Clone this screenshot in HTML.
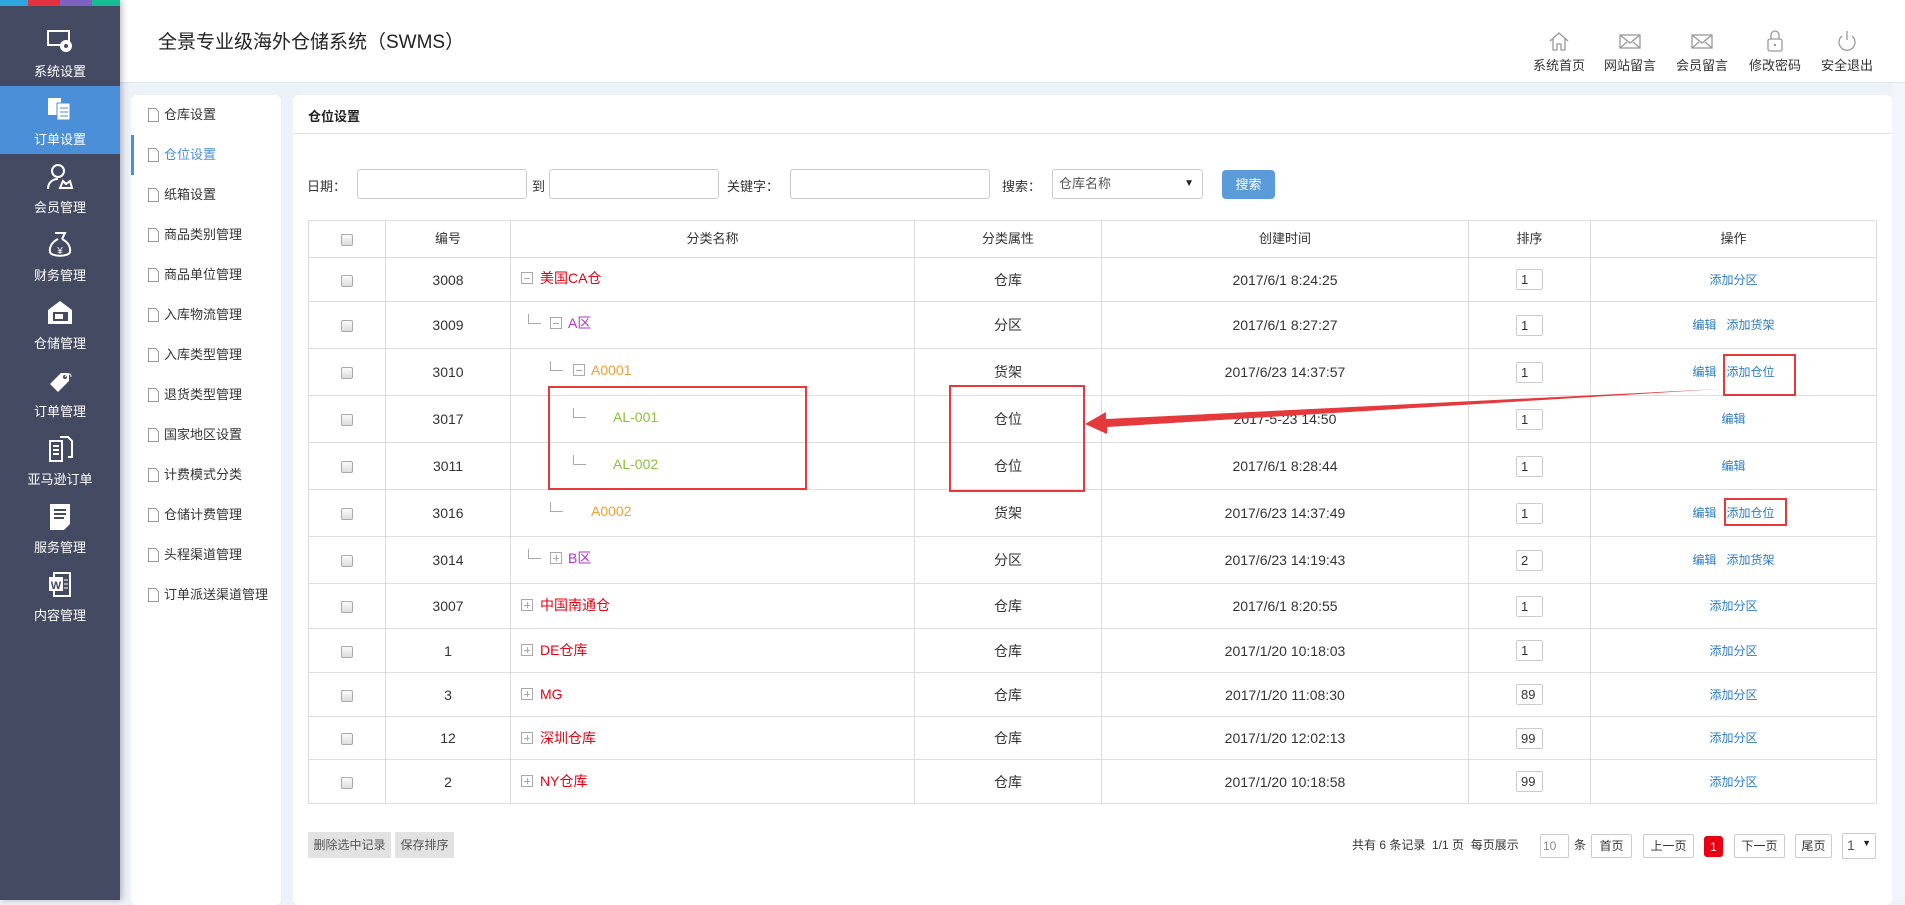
<!DOCTYPE html>
<html><head><meta charset="utf-8">
<style>
*{margin:0;padding:0;box-sizing:border-box}
body{width:1905px;height:900px;overflow:hidden;background:#edf1f8;font-family:"Liberation Sans","Noto Sans CJK SC",sans-serif;color:#333;position:relative}
.abs{position:absolute}
#side{left:0;top:0;width:120px;height:900px;background:#434a62;box-shadow:2px 0 6px rgba(0,0,0,.25);z-index:3}
.mi{position:absolute;left:0;width:120px;height:68px;color:#fff;font-size:13px;text-align:center}
.mi svg{position:absolute;left:46px;top:8px}
.mi span{position:absolute;left:0;right:0;bottom:6px}
#hdr{left:120px;top:0;width:1785px;height:83px;background:#fff;border-bottom:1px solid #dfe5ee}
.nav{position:absolute;top:30px;font-size:13px;color:#333;text-align:center;width:60px}
.nav svg{display:block;margin:0 auto 3px}
#sub{left:131px;top:95px;width:150px;height:810px;background:#fff;border-radius:6px}
.si{position:absolute;left:0;font-size:13px;color:#333;height:20px;line-height:20px}
.si svg{position:absolute;left:17px;top:3px}
.si span{position:absolute;left:33px;white-space:nowrap}
#main{left:293px;top:95px;width:1599px;height:810px;background:#fff;border-radius:6px}
input.t{position:absolute;height:30px;border:1px solid #ccc;border-radius:3px;background:#fff}
table{position:absolute;left:308px;top:220px;border-collapse:collapse;table-layout:fixed;font-size:14px}
td,th{border:1px solid #ddd;text-align:center;font-weight:normal;color:#333;padding:0;white-space:nowrap;line-height:16px}
th{font-size:13px}
td.n{text-align:left;position:relative}
.cb{display:inline-block;width:12px;height:12px;border:1px solid #aaa;border-radius:2px;background:linear-gradient(#fafafa,#ddd);vertical-align:middle}
.sort{display:inline-block;width:27px;height:21px;border:1px solid #ccc;border-radius:2px;text-align:left;padding-left:4px;font-size:13px;line-height:19px;vertical-align:middle}
.op{color:#2b7cc4;font-size:12px}
.tl{position:absolute;width:13px;height:10px;border-left:1px solid #aaa;border-bottom:1px solid #aaa;top:12px}
.ic{position:absolute;width:12px;height:12px;border:1px solid #aaa;top:15px}
.ic:before{content:"";position:absolute;left:2px;right:2px;top:5px;height:1px;background:#aaa}
.ic.p:after{content:"";position:absolute;top:2px;bottom:2px;left:5px;width:1px;background:#aaa}
.tx{position:absolute;top:13px;font-size:14px}
.r{color:#e60012}.pu{color:#b432d0}.o{color:#f0a030}.g{color:#8dc03c}
.box{position:absolute;border:2px solid #e5393c;z-index:5}
.pg{position:absolute;top:834px;height:24px;font-size:12px;line-height:22px}
.pb{position:absolute;top:834px;height:24px;border:1px solid #ccc;border-radius:2px;font-size:12px;line-height:22px;text-align:center;background:#fff}
</style></head><body>

<div id="side" class="abs">
  <div class="abs" style="left:0;top:0;width:28px;height:6px;background:#2ea7e0"></div>
  <div class="abs" style="left:28px;top:0;width:32px;height:6px;background:#e5323e"></div>
  <div class="abs" style="left:60px;top:0;width:32px;height:6px;background:#7d62c4"></div>
  <div class="abs" style="left:92px;top:0;width:28px;height:6px;background:#17bc94"></div>
  <div class="mi" style="top:18px"><svg width="28" height="30" viewBox="0 0 28 30"><rect x="2" y="5" width="21" height="14" fill="none" stroke="#fff" stroke-width="2"/><circle cx="20" cy="20" r="6" fill="#fff"/><circle cx="20" cy="20" r="2" fill="#434a62"/></svg><span>系统设置</span></div>
  <div class="mi" style="top:86px;background:#4a8fd8"><svg width="28" height="30" viewBox="0 0 28 30"><rect x="2" y="4" width="13" height="17" fill="#fff"/><rect x="11" y="9" width="13" height="17" fill="#fff" stroke="#4a8fd8"/><path d="M14 14h8M14 18h8M14 22h8" stroke="#4a8fd8"/></svg><span>订单设置</span></div>
  <div class="mi" style="top:154px"><svg width="28" height="30" viewBox="0 0 28 30"><circle cx="12" cy="9" r="6" fill="none" stroke="#fff" stroke-width="2"/><path d="M2 27c0-6 4-10 10-10M14 26h12l-2-7-4 3-3-3z" fill="none" stroke="#fff" stroke-width="2"/></svg><span>会员管理</span></div>
  <div class="mi" style="top:222px"><svg width="28" height="30" viewBox="0 0 28 30"><path d="M9 3h10l-3 6M12 9c-6 3-9 8-8 13 1 5 19 5 20 0 1-5-2-10-8-13" fill="none" stroke="#fff" stroke-width="2"/><text x="14" y="24" fill="#fff" font-size="10" text-anchor="middle">¥</text></svg><span>财务管理</span></div>
  <div class="mi" style="top:290px"><svg width="28" height="30" viewBox="0 0 28 30"><path d="M2 12L14 3l12 9v14H2z" fill="#fff"/><rect x="7" y="14" width="15" height="9" fill="#434a62"/><rect x="9" y="16" width="8" height="5" fill="#fff"/></svg><span>仓储管理</span></div>
  <div class="mi" style="top:358px"><svg width="28" height="30" viewBox="0 0 28 30"><path d="M4 18L15 7h8v8L12 26z" fill="#fff"/><circle cx="19" cy="11" r="2" fill="#434a62"/><path d="M19 11c3-4 6-4 6 0" fill="none" stroke="#fff"/></svg><span>订单管理</span></div>
  <div class="mi" style="top:426px"><svg width="28" height="30" viewBox="0 0 28 30"><path d="M4 7h12v20H4zM14 3h8l4 4v16h-4" fill="none" stroke="#fff" stroke-width="2"/><path d="M7 12h6M7 16h6M7 20h6" stroke="#fff" stroke-width="2"/></svg><span>亚马逊订单</span></div>
  <div class="mi" style="top:494px"><svg width="28" height="30" viewBox="0 0 28 30"><path d="M4 2h20v20l-6 6H4z" fill="#fff"/><path d="M8 8h12M8 12h12M8 16h10" stroke="#434a62" stroke-width="2"/></svg><span>服务管理</span></div>
  <div class="mi" style="top:562px"><svg width="28" height="30" viewBox="0 0 28 30"><rect x="8" y="3" width="16" height="23" fill="none" stroke="#fff" stroke-width="2"/><rect x="3" y="7" width="14" height="14" fill="#fff"/><text x="10" y="19" fill="#434a62" font-size="11" font-weight="bold" text-anchor="middle">W</text><path d="M18 10h4M18 14h4M18 18h4" stroke="#fff"/></svg><span>内容管理</span></div>
</div>

<div id="hdr" class="abs">
  <div class="abs" style="left:38px;top:27px;font-size:19px;color:#222">全景专业级海外仓储系统（SWMS）</div>
  <div class="nav" style="left:1409px"><svg width="22" height="22" viewBox="0 0 22 22"><path d="M2 11L11 3l9 8M5 9v11h4v-6h4v6h4V9" fill="none" stroke="#999" stroke-width="1.3"/></svg>系统首页</div>
  <div class="nav" style="left:1480px"><svg width="22" height="22" viewBox="0 0 22 22"><rect x="1" y="5" width="20" height="13" fill="none" stroke="#999" stroke-width="1.3"/><path d="M1 5l10 8 10-8M1 18l7-6M21 18l-7-6" fill="none" stroke="#999" stroke-width="1.3"/></svg>网站留言</div>
  <div class="nav" style="left:1552px"><svg width="22" height="22" viewBox="0 0 22 22"><rect x="1" y="5" width="20" height="13" fill="none" stroke="#999" stroke-width="1.3"/><path d="M1 5l10 8 10-8M1 18l7-6M21 18l-7-6" fill="none" stroke="#999" stroke-width="1.3"/></svg>会员留言</div>
  <div class="nav" style="left:1625px"><svg width="22" height="22" viewBox="0 0 22 22"><rect x="4" y="9" width="14" height="12" rx="2" fill="none" stroke="#999" stroke-width="1.3"/><path d="M7 9V5a4 4 0 0 1 8 0v4" fill="none" stroke="#999" stroke-width="1.3"/><circle cx="11" cy="15" r="1.2" fill="#999"/></svg>修改密码</div>
  <div class="nav" style="left:1697px"><svg width="22" height="22" viewBox="0 0 22 22"><path d="M6 6a8 8 0 1 0 10 0" fill="none" stroke="#999" stroke-width="1.3"/><path d="M11 1v9" stroke="#999" stroke-width="1.3"/></svg>安全退出</div>
</div>

<div id="sub" class="abs">
  <div class="abs" style="left:0;top:40px;width:3px;height:40px;background:#4a8fd8"></div>
</div>
<div class="abs" style="left:131px;top:95px;width:150px;height:700px">
  <div class="si" style="top:10px"><svg width="11" height="14" viewBox="0 0 11 14"><path d="M.5.5h7l3 3v10H.5z" fill="none" stroke="#999"/></svg><span>仓库设置</span></div>
  <div class="si" style="top:50px;color:#4a8fd8"><svg width="11" height="14" viewBox="0 0 11 14"><path d="M.5.5h7l3 3v10H.5z" fill="none" stroke="#999"/></svg><span>仓位设置</span></div>
  <div class="si" style="top:90px"><svg width="11" height="14" viewBox="0 0 11 14"><path d="M.5.5h7l3 3v10H.5z" fill="none" stroke="#999"/></svg><span>纸箱设置</span></div>
  <div class="si" style="top:130px"><svg width="11" height="14" viewBox="0 0 11 14"><path d="M.5.5h7l3 3v10H.5z" fill="none" stroke="#999"/></svg><span>商品类别管理</span></div>
  <div class="si" style="top:170px"><svg width="11" height="14" viewBox="0 0 11 14"><path d="M.5.5h7l3 3v10H.5z" fill="none" stroke="#999"/></svg><span>商品单位管理</span></div>
  <div class="si" style="top:210px"><svg width="11" height="14" viewBox="0 0 11 14"><path d="M.5.5h7l3 3v10H.5z" fill="none" stroke="#999"/></svg><span>入库物流管理</span></div>
  <div class="si" style="top:250px"><svg width="11" height="14" viewBox="0 0 11 14"><path d="M.5.5h7l3 3v10H.5z" fill="none" stroke="#999"/></svg><span>入库类型管理</span></div>
  <div class="si" style="top:290px"><svg width="11" height="14" viewBox="0 0 11 14"><path d="M.5.5h7l3 3v10H.5z" fill="none" stroke="#999"/></svg><span>退货类型管理</span></div>
  <div class="si" style="top:330px"><svg width="11" height="14" viewBox="0 0 11 14"><path d="M.5.5h7l3 3v10H.5z" fill="none" stroke="#999"/></svg><span>国家地区设置</span></div>
  <div class="si" style="top:370px"><svg width="11" height="14" viewBox="0 0 11 14"><path d="M.5.5h7l3 3v10H.5z" fill="none" stroke="#999"/></svg><span>计费模式分类</span></div>
  <div class="si" style="top:410px"><svg width="11" height="14" viewBox="0 0 11 14"><path d="M.5.5h7l3 3v10H.5z" fill="none" stroke="#999"/></svg><span>仓储计费管理</span></div>
  <div class="si" style="top:450px"><svg width="11" height="14" viewBox="0 0 11 14"><path d="M.5.5h7l3 3v10H.5z" fill="none" stroke="#999"/></svg><span>头程渠道管理</span></div>
  <div class="si" style="top:490px"><svg width="11" height="14" viewBox="0 0 11 14"><path d="M.5.5h7l3 3v10H.5z" fill="none" stroke="#999"/></svg><span>订单派送渠道管理</span></div>
</div>

<div id="main" class="abs"></div>
<div class="abs" style="left:308px;top:106px;font-size:13px;font-weight:bold;color:#222">仓位设置</div>
<div class="abs" style="left:293px;top:133px;width:1599px;height:1px;background:#e3e3e3"></div>

<div class="abs" style="left:307px;top:176px;font-size:13px">日期：</div>
<input class="t" style="left:357px;top:169px;width:170px">
<div class="abs" style="left:532px;top:176px;font-size:13px">到</div>
<input class="t" style="left:549px;top:169px;width:170px">
<div class="abs" style="left:727px;top:176px;font-size:13px">关键字：</div>
<input class="t" style="left:790px;top:169px;width:200px">
<div class="abs" style="left:1002px;top:176px;font-size:13px">搜索：</div>
<div class="abs" style="left:1052px;top:169px;width:151px;height:30px;border:1px solid #ccc;border-radius:3px;font-size:13px;line-height:28px;padding-left:6px;color:#555">仓库名称<span style="position:absolute;right:8px;font-size:10px;color:#222">▼</span></div>
<div class="abs" style="left:1222px;top:170px;width:53px;height:29px;background:#5b9bd9;border-radius:4px;color:#fff;font-size:13px;line-height:29px;text-align:center">搜索</div>

<table>
<colgroup><col style="width:77px"><col style="width:125px"><col style="width:404px"><col style="width:187px"><col style="width:367px"><col style="width:122px"><col style="width:286px"></colgroup>
<tr style="height:37px"><th><span class="cb"></span></th><th>编号</th><th>分类名称</th><th>分类属性</th><th>创建时间</th><th>排序</th><th>操作</th></tr>
<tr style="height:44px"><td><span class="cb"></span></td><td>3008</td><td class="n"><i class="ic" style="left:10px;top:14px"></i><span class="tx r" style="left:29px;top:12px">美国CA仓</span></td><td>仓库</td><td>2017/6/1 8:24:25</td><td><span class="sort">1</span></td><td class="op">添加分区</td></tr>
<tr style="height:47px"><td><span class="cb"></span></td><td>3009</td><td class="n"><i class="tl" style="left:17px"></i><i class="ic" style="left:39px"></i><span class="tx pu" style="left:57px">A区</span></td><td>分区</td><td>2017/6/1 8:27:27</td><td><span class="sort">1</span></td><td class="op">编辑&nbsp;&nbsp;&nbsp;添加货架</td></tr>
<tr style="height:47px"><td><span class="cb"></span></td><td>3010</td><td class="n"><i class="tl" style="left:39px"></i><i class="ic" style="left:62px"></i><span class="tx o" style="left:80px">A0001</span></td><td>货架</td><td>2017/6/23 14:37:57</td><td><span class="sort">1</span></td><td class="op">编辑&nbsp;&nbsp;&nbsp;添加仓位</td></tr>
<tr style="height:47px"><td><span class="cb"></span></td><td>3017</td><td class="n"><i class="tl" style="left:62px"></i><span class="tx g" style="left:102px">AL-001</span></td><td>仓位</td><td>2017-5-23 14:50</td><td><span class="sort">1</span></td><td class="op">编辑</td></tr>
<tr style="height:47px"><td><span class="cb"></span></td><td>3011</td><td class="n"><i class="tl" style="left:62px"></i><span class="tx g" style="left:102px">AL-002</span></td><td>仓位</td><td>2017/6/1 8:28:44</td><td><span class="sort">1</span></td><td class="op">编辑</td></tr>
<tr style="height:47px"><td><span class="cb"></span></td><td>3016</td><td class="n"><i class="tl" style="left:39px"></i><span class="tx o" style="left:80px">A0002</span></td><td>货架</td><td>2017/6/23 14:37:49</td><td><span class="sort">1</span></td><td class="op">编辑&nbsp;&nbsp;&nbsp;添加仓位</td></tr>
<tr style="height:47px"><td><span class="cb"></span></td><td>3014</td><td class="n"><i class="tl" style="left:17px"></i><i class="ic p" style="left:39px"></i><span class="tx pu" style="left:57px">B区</span></td><td>分区</td><td>2017/6/23 14:19:43</td><td><span class="sort">2</span></td><td class="op">编辑&nbsp;&nbsp;&nbsp;添加货架</td></tr>
<tr style="height:45px"><td><span class="cb"></span></td><td>3007</td><td class="n"><i class="ic p" style="left:10px"></i><span class="tx r" style="left:29px">中国南通仓</span></td><td>仓库</td><td>2017/6/1 8:20:55</td><td><span class="sort">1</span></td><td class="op">添加分区</td></tr>
<tr style="height:44px"><td><span class="cb"></span></td><td>1</td><td class="n"><i class="ic p" style="left:10px"></i><span class="tx r" style="left:29px">DE仓库</span></td><td>仓库</td><td>2017/1/20 10:18:03</td><td><span class="sort">1</span></td><td class="op">添加分区</td></tr>
<tr style="height:44px"><td><span class="cb"></span></td><td>3</td><td class="n"><i class="ic p" style="left:10px"></i><span class="tx r" style="left:29px">MG</span></td><td>仓库</td><td>2017/1/20 11:08:30</td><td><span class="sort">89</span></td><td class="op">添加分区</td></tr>
<tr style="height:43px"><td><span class="cb"></span></td><td>12</td><td class="n"><i class="ic p" style="left:10px"></i><span class="tx r" style="left:29px">深圳仓库</span></td><td>仓库</td><td>2017/1/20 12:02:13</td><td><span class="sort">99</span></td><td class="op">添加分区</td></tr>
<tr style="height:44px"><td><span class="cb"></span></td><td>2</td><td class="n"><i class="ic p" style="left:10px"></i><span class="tx r" style="left:29px">NY仓库</span></td><td>仓库</td><td>2017/1/20 10:18:58</td><td><span class="sort">99</span></td><td class="op">添加分区</td></tr>
</table>

<div class="box" style="left:548px;top:386px;width:259px;height:104px"></div>
<div class="box" style="left:949px;top:385px;width:136px;height:107px"></div>
<div class="box" style="left:1723px;top:354px;width:73px;height:42px"></div>
<div class="box" style="left:1724px;top:498px;width:63px;height:28px"></div>
<svg class="abs" style="left:0;top:0;z-index:6" width="1905" height="900"><polygon points="1720,389 1106,419 1106,412 1085,424 1107,434 1107,427" fill="#e5393c"/></svg>

<div class="abs" style="left:308px;top:832px;width:83px;height:26px;background:#e2e2e2;font-size:12px;line-height:26px;text-align:center;color:#555">删除选中记录</div>
<div class="abs" style="left:395px;top:832px;width:59px;height:26px;background:#e2e2e2;font-size:12px;line-height:26px;text-align:center;color:#555">保存排序</div>

<div class="pg" style="left:1352px">共有 6 条记录&nbsp;&nbsp;1/1 页&nbsp;&nbsp;每页展示</div>
<div class="pb" style="left:1540px;width:29px;color:#888;text-align:left;padding-left:2px">10</div>
<div class="pg" style="left:1574px">条</div>
<div class="pb" style="left:1591px;width:41px">首页</div>
<div class="pb" style="left:1643px;width:51px">上一页</div>
<div class="pb" style="left:1704px;top:836px;width:19px;height:21px;background:#e60012;border-color:#e60012;color:#fff;line-height:20px;border-radius:3px">1</div>
<div class="pb" style="left:1734px;width:51px">下一页</div>
<div class="pb" style="left:1795px;width:37px">尾页</div>
<div class="pb" style="left:1842px;top:833px;width:34px;height:26px;font-size:14px;text-align:left;padding-left:4px;color:#555">1<span style="position:absolute;right:4px;top:-2px;font-size:9px;color:#222">▼</span></div>

<div class="abs" style="left:1892px;top:83px;width:13px;height:817px;background:#f2f5fa"></div>
</body></html>
